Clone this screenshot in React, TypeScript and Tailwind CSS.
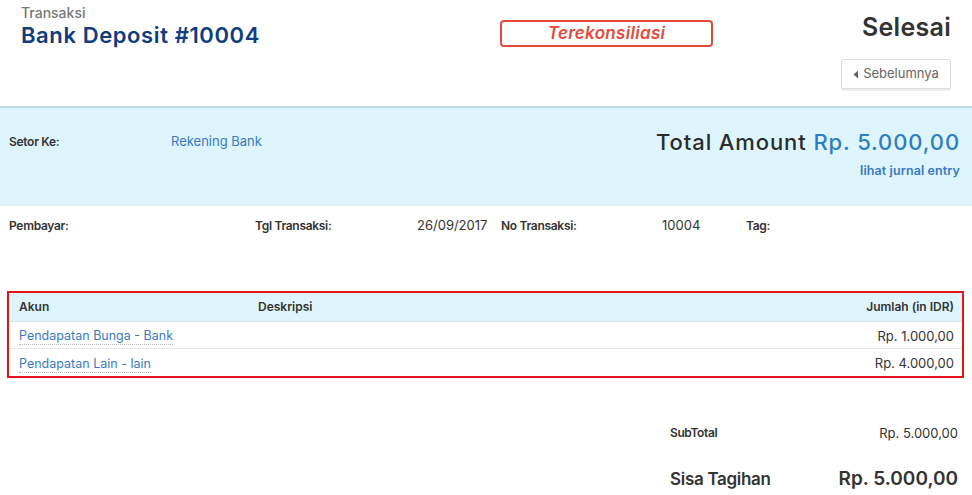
import React from "react";

const rows = [
  { akun: "Pendapatan Bunga - Bank", jumlah: "Rp. 1.000,00" },
  { akun: "Pendapatan Lain - lain", jumlah: "Rp. 4.000,00" },
];

export default function App() {
  return (
    <div className="h-[495px] w-[972px] overflow-hidden bg-white text-[#333]" style={{ fontFamily: "Inter, 'Noto Sans', sans-serif" }}>
      {/* header */}
      <div className="flex h-[106px] items-start px-[21px] pt-[4px]">
        <div className="w-[479px]">
          <p className="text-[14px] font-medium leading-[18px] text-[#777]">Transaksi</p>
          <h1 className="text-[22px] font-semibold leading-[26px] tracking-[0.6px] text-[#0f3d7d]">Bank Deposit #10004</h1>
        </div>
        <div className="mt-[16px] flex h-[27px] w-[213px] items-center justify-center rounded-[4px] border-2 border-[#e8483b]">
          <span className="text-[17px] font-semibold italic tracking-[0.3px] text-[#e8483b]">Terekonsiliasi</span>
        </div>
        <div className="ml-auto flex flex-col items-end">
          <p className="mt-[8px] text-[25px] font-semibold leading-[30px] tracking-[0.3px] text-[#333]">Selesai</p>
          <button className="mt-[17px] flex h-[30px] w-[110px] items-center justify-center gap-[4px] rounded-[2px] border border-[#ddd] bg-white text-[13px] text-[#666] shadow-[0_2px_0_#eee]">
            <svg width="6" height="9" viewBox="0 0 6 9"><path d="M5 0.5 L0.5 4.5 L5 8.5 Z" fill="#666" /></svg>
            Sebelumnya
          </button>
        </div>
      </div>

      {/* blue band */}
      <div className="h-[100px] border-t-2 border-b border-t-[#c2dce6] border-b-[#e8eef0] bg-[#def5fd]">
        <div className="flex items-start pl-[9px] pr-[12px] pt-[20px]">
          <span className="mt-[5px] w-[162px] text-[12px] font-semibold tracking-[-0.3px] text-[#333]">Setor Ke:</span>
          <span className="mt-[4px] text-[13px] text-[#3a79bf]">Rekening Bank</span>
          <div className="ml-auto flex flex-col items-end">
            <p className="text-[22px] font-medium leading-[28px] tracking-[0.9px] text-[#2c2c2c]">
              Total Amount <span className="text-[#2e7fc0]">Rp. 5.000,00</span>
            </p>
            <a className="mt-[6px] text-[12.5px] font-semibold tracking-[0.1px] text-[#3a79bf]">lihat jurnal entry</a>
          </div>
        </div>
      </div>

      {/* info row */}
      <div className="flex items-center pl-[9px] pt-[10px] text-[12px]">
        <span className="w-[246px] font-semibold tracking-[-0.3px]">Pembayar:</span>
        <span className="w-[162px] font-semibold tracking-[-0.3px]">Tgl Transaksi:</span>
        <span className="w-[84px] text-[13px]">26/09/2017</span>
        <span className="w-[161px] font-semibold tracking-[-0.3px]">No Transaksi:</span>
        <span className="w-[84px] text-[13px]">10004</span>
        <span className="font-semibold tracking-[-0.3px]">Tag:</span>
      </div>

      {/* table */}
      <div className="mt-[55px] ml-[7px] w-[957px] border-2 border-[#e5141b]">
        <div className="flex h-[29px] items-center border-b border-[#d5e3e8] bg-[#def5fd] pl-[10px] pr-[8px] text-[12px] font-semibold">
          <span className="w-[239px]">Akun</span>
          <span>Deskripsi</span>
          <span className="ml-auto">Jumlah (in IDR)</span>
        </div>
        {rows.map((r, i) => (
          <div key={r.akun} className={`flex h-[27px] items-center pl-[10px] pr-[8px] pt-[4px] text-[13px] ${i === 0 ? "border-b border-[#e8e8e8]" : ""}`}>
            <span className="border-b border-dotted border-[#bbb] text-[12.5px] leading-[16px] text-[#3a79bf]">{r.akun}</span>
            <span className="ml-auto text-[#333]">{r.jumlah}</span>
          </div>
        ))}
      </div>

      {/* totals */}
      <div className="ml-[670px] mr-[14px] mt-[46px] flex flex-col">
        <div className="flex items-center justify-between">
          <span className="text-[12px] font-semibold tracking-[-0.4px]">SubTotal</span>
          <span className="text-[13px]">Rp. 5.000,00</span>
        </div>
        <div className="mt-[22px] flex items-center justify-between">
          <span className="text-[17px] font-semibold tracking-[-0.3px]">Sisa Tagihan</span>
          <span className="text-[19px] font-semibold">Rp. 5.000,00</span>
        </div>
      </div>
    </div>
  );
}
